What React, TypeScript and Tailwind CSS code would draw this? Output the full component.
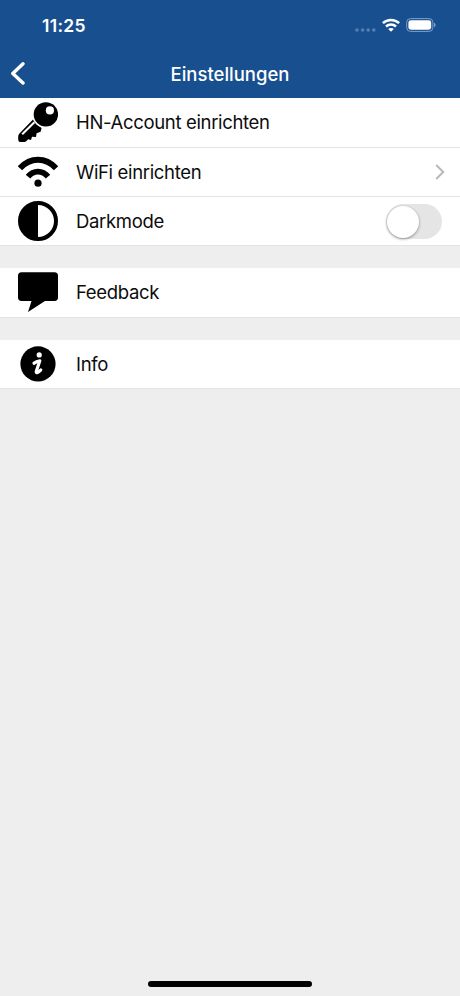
import type { ReactNode } from 'react';

interface SettingsRowProps {
  icon: ReactNode;
  label: string;
  tall?: boolean;
  children?: ReactNode;
}

function SettingsRow({ icon, label, tall = false, children }: SettingsRowProps) {
  return (
    <li className={`flex items-center border-b border-[#e4e4e4] bg-white pl-[18px] pr-[15px] ${tall ? 'h-[50px] pb-px' : 'h-[49px]'}`}>
      <span className="flex w-10 shrink-0 justify-center">{icon}</span>
      <span className="ml-[18px] flex-1 text-[18.5px] leading-6 tracking-[-0.34px] text-[#0c0c0c]">{label}</span>
      {children}
    </li>
  );
}

function KeyIcon() {
  return (
    <svg className="size-10" viewBox="0 0 40 40">
      <path d="M15 17.6 L1.2 31.8 Q0.2 33 .2 34.4 V37.4 Q.4 40.2 3 40.2 H5.8 Q7.4 40.2 8.4 39 L10.2 37.2 L13 38 L14 34.8 L18 35 L18.6 31.2 L22.6 29.8 L23.6 26 Z" />
      <circle cx="28" cy="12.4" r="13.8" fill="#fff" />
      <path d="M16.4 20.2 L4.2 32.2" stroke="#fff" strokeWidth="2.1" />
      <circle cx="27.9" cy="12.4" r="12.2" />
      <circle cx="31.9" cy="8.4" r="4.1" fill="#fff" />
    </svg>
  );
}

function WifiIcon() {
  return (
    <svg className="size-10" viewBox="0 0 40 40" fill="none" stroke="#000">
      <path d="M2 16.2 C12.3 4.9 27.7 4.9 38 16.2" strokeWidth="5.8" />
      <path d="M10 24.7 C15.6 17.8 24.4 17.8 30 24.7" strokeWidth="5.8" />
      <circle cx="20" cy="31.2" r="3.6" fill="#000" stroke="none" />
    </svg>
  );
}

function ContrastIcon() {
  return (
    <svg className="size-10" viewBox="0 0 40 40">
      <circle cx="20" cy="20" r="18" fill="#fff" stroke="#000" strokeWidth="4" />
      <path d="M20 2 A18 18 0 0 0 20 38 Z" />
    </svg>
  );
}

function BubbleIcon() {
  return (
    <svg className="size-10" viewBox="0 0 40 40">
      <path d="M3.5 .3 H36.5 Q40 .3 40 3.8 V25.6 Q40 29 36.5 29 H27 L10 40 L13.5 29 H3.5 Q0 29 0 25.6 V3.8 Q0 .3 3.5 .3 Z" />
    </svg>
  );
}

function InfoIcon() {
  return (
    <svg className="size-[36px]" viewBox="0 0 36 36">
      <circle cx="18" cy="17.9" r="17.6" />
      <circle cx="19.2" cy="8.9" r="2.6" fill="#fff" />
      <path d="M14 17.2 C15.8 15.6 17.6 15 19.8 14.8 L16.4 25 C15.6 27.6 18 27.2 20.8 24" fill="none" stroke="#fff" strokeWidth="3.2" strokeLinecap="round" strokeLinejoin="round" />
    </svg>
  );
}

function StatusBar() {
  return (
    <div className="flex h-[50px] items-center justify-between pl-[42px] pr-[24px]">
      <span className="pt-px text-[17.5px] font-semibold leading-6 tracking-[0.3px]">11:25</span>
      <div className="flex items-center">
        <svg className="mt-[9px] h-1 w-[21px]" viewBox="0 0 21 4" fill="#5280b5">
          <circle cx="2" cy="2" r="1.8" />
          <circle cx="7.6" cy="2" r="1.8" />
          <circle cx="13.2" cy="2" r="1.8" />
          <circle cx="18.8" cy="2" r="1.8" />
        </svg>
        <svg className="ml-1.5 h-[14px] w-[18px]" viewBox="0 0 18 14" fill="none" stroke="#fff" strokeWidth="2.5">
          <path d="M.9 5.2 C5.4 .8 12.6 .8 17.1 5.2" />
          <path d="M4 8.5 C6.8 5.9 11.2 5.9 14 8.5" />
          <path d="M9 13.8 L6.2 11 C7.7 9.6 10.3 9.6 11.8 11 Z" fill="#fff" stroke="none" />
        </svg>
        <svg className="ml-1.5 h-[14px] w-[30px]" viewBox="0 0 30 14">
          <rect x=".7" y=".6" width="26.2" height="12.8" rx="3.8" fill="none" stroke="#7da1ca" strokeWidth="1" />
          <rect x="2.4" y="2.3" width="22.8" height="9.4" rx="2.4" fill="#fff" />
          <path d="M28 4.8 Q29.6 5.4 29.6 7 Q29.6 8.6 28 9.2 Z" fill="#7da1ca" />
        </svg>
      </div>
    </div>
  );
}

export default function App() {
  return (
    <div className="flex h-[996px] w-[460px] flex-col bg-[#eeeeee] font-[Inter,'Liberation_Sans',sans-serif]">
      <header className="h-[98px] bg-[#18508f] text-white">
        <StatusBar />
        <div className="grid h-12 grid-cols-[1fr_auto_1fr] items-center">
          <button className="ml-[10px] w-4" aria-label="Zurück">
            <svg className="h-6 w-4" viewBox="0 0 16 24" fill="none" stroke="#fff" strokeWidth="3.4" strokeLinecap="round" strokeLinejoin="round">
              <path d="M13 1.8 L2.8 11.4 L13 21" />
            </svg>
          </button>
          <h1 className="text-[18.5px] font-medium leading-6">Einstellungen</h1>
        </div>
      </header>

      <main className="flex flex-1 flex-col gap-[22px]">
        <ul>
          <SettingsRow icon={<KeyIcon />} label="HN-Account einrichten" tall />
          <SettingsRow icon={<WifiIcon />} label="WiFi einrichten">
            <svg className="h-4 w-[10px]" viewBox="0 0 10 16" fill="none" stroke="#b9b9b9" strokeWidth="2">
              <path d="M1.2 1 L8.2 8 L1.2 15" />
            </svg>
          </SettingsRow>
          <SettingsRow icon={<ContrastIcon />} label="Darkmode">
            <button role="switch" aria-checked="false" aria-label="Darkmode" className="mr-[3px] mt-px flex h-[35px] w-14 items-center rounded-full bg-[#e5e5e5] px-px">
              <span className="size-[32px] rounded-full bg-white shadow-[0_1px_3px_rgba(0,0,0,0.4)]" />
            </button>
          </SettingsRow>
        </ul>
        <ul>
          <SettingsRow icon={<BubbleIcon />} label="Feedback" tall />
        </ul>
        <ul>
          <SettingsRow icon={<InfoIcon />} label="Info" />
        </ul>
      </main>

      <footer className="flex h-[15px] justify-center">
        <div className="h-[6px] w-[164px] rounded-full bg-black" />
      </footer>
    </div>
  );
}
